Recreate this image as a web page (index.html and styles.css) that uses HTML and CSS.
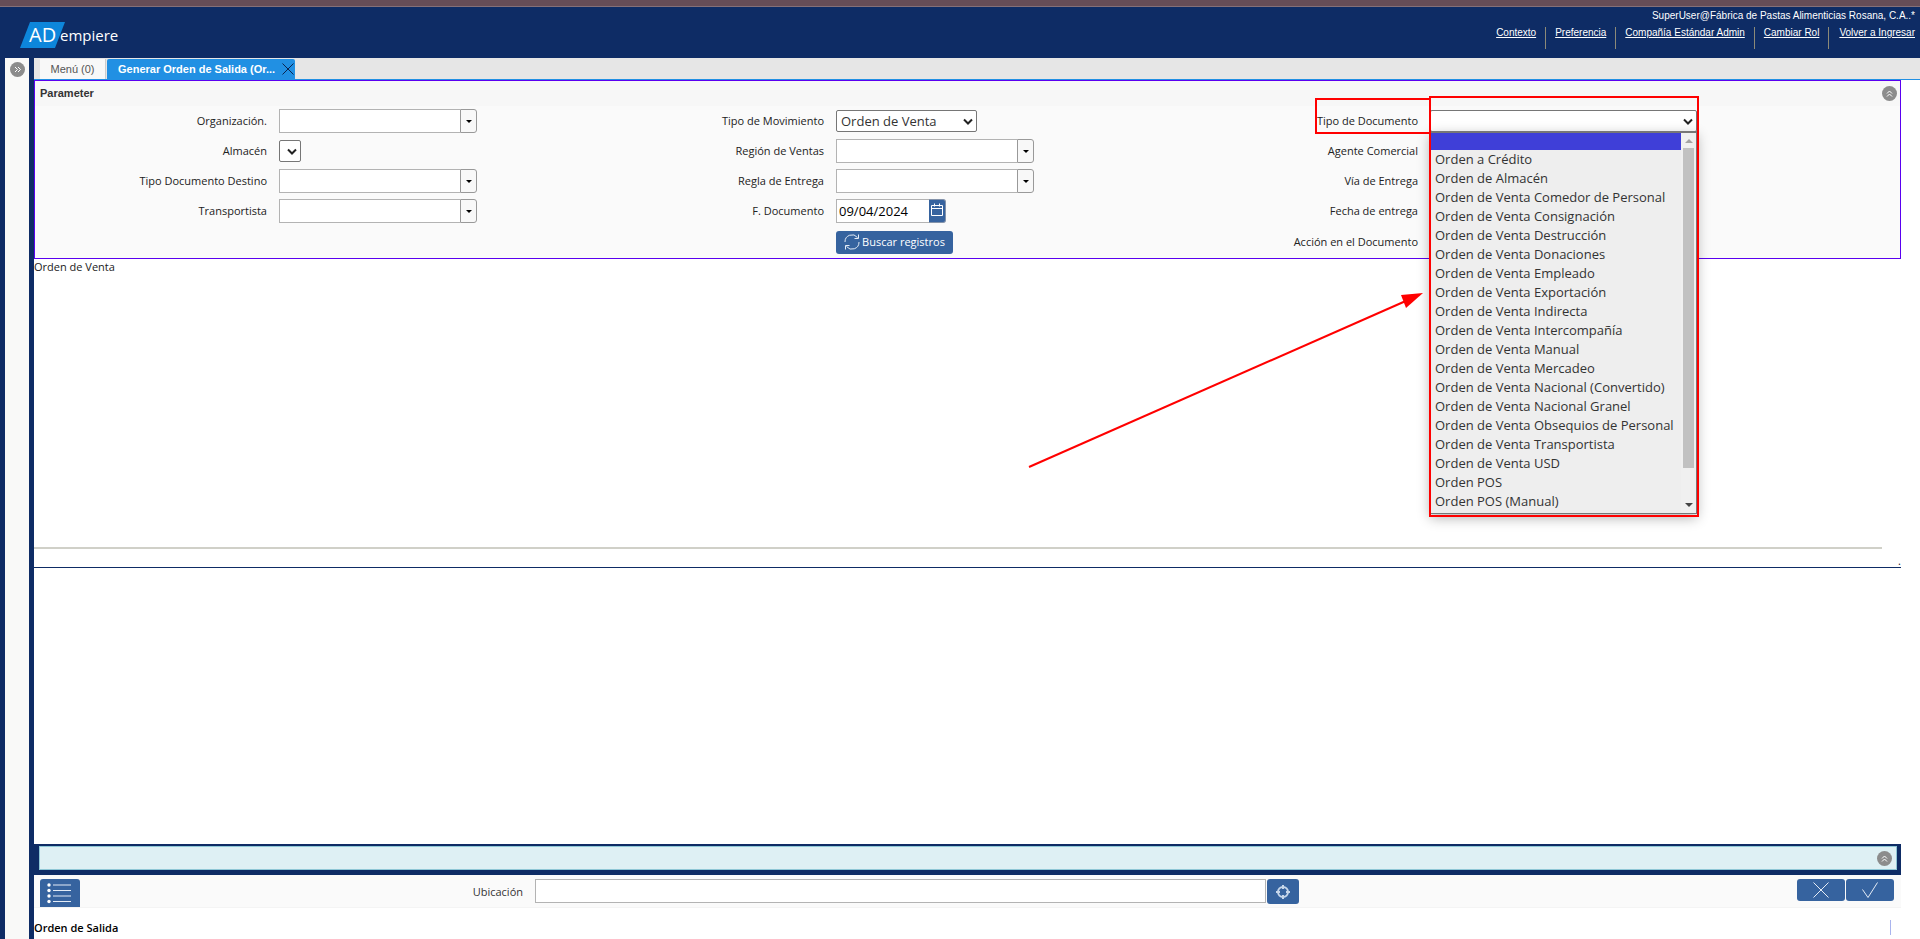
FILE: index.html
```html
<!DOCTYPE html>
<html lang="es">
<head>
<meta charset="utf-8">
<title>ADempiere - Generar Orden de Salida</title>
<link rel="stylesheet" href="styles.css">
</head>
<body>
<div class="app">
  <div class="top-strip"></div>
  <header class="header">
    <div class="logo">
      <svg class="logo-shape" viewBox="0 0 45 26" aria-hidden="true"><path d="M10 0H45L35 26H0Z" fill="#0d86db"/></svg>
      <span class="logo-ad">AD</span><span class="logo-rest">empiere</span>
    </div>
    <div class="session">
      <div class="user">SuperUser@Fábrica de Pastas Alimenticias Rosana, C.A..*</div>
      <nav class="links">
        <a href="#">Contexto</a>
        <a href="#">Preferencia</a>
        <a href="#">Compañía Estándar Admin</a>
        <a href="#">Cambiar Rol</a>
        <a href="#">Volver a Ingresar</a>
      </nav>
    </div>
  </header>
  <div class="workspace">
    <aside class="side">
      <button class="round" aria-label="Expandir">
        <svg viewBox="0 0 15 15"><path d="M5 5l2.500 2.500L5 10M8 5l2.500 2.500L8 10"/></svg>
      </button>
    </aside>
    <main class="main">
      <div class="tabs">
        <button class="tab">Menú (0)</button>
        <button class="tab active"><span>Generar Orden de Salida (Or...</span>
          <svg class="tab-close" viewBox="0 0 12 12"><path d="M0.500 0.500l11 11M11.500 0.500l-11 11"/></svg>
        </button>
      </div>
      <div class="content">
        <section class="panel">
          <div class="panel-head">
            <span>Parameter</span>
            <button class="round" aria-label="Contraer"><svg viewBox="0 0 15 15"><path d="M5 7.500L7.500 5L10 7.500M5 10.500L7.500 8L10 10.500"/></svg></button>
          </div>
          <form class="form">
            <label for="org">Organización.</label>
            <div class="combo"><input id="org" type="text"><button type="button" aria-label="Abrir"></button></div>
            <label for="mov">Tipo de Movimiento</label>
            <div class="pick pick-mov"><select id="mov"><option>Orden de Venta</option></select><svg class="chev" viewBox="0 0 10 7"><path d="M1 1.500l4 4l4-4"/></svg></div>
            <label for="doc">Tipo de Documento</label>
            <div class="pick pick-doc">
              <select id="doc"><option></option></select><svg class="chev" viewBox="0 0 10 7"><path d="M1 1.500l4 4l4-4"/></svg>
              <div class="menu">
                <ul class="options">
                  <li class="selected"></li>
                  <li>Orden a Crédito</li>
                  <li>Orden de Almacén</li>
                  <li>Orden de Venta Comedor de Personal</li>
                  <li>Orden de Venta Consignación</li>
                  <li>Orden de Venta Destrucción</li>
                  <li>Orden de Venta Donaciones</li>
                  <li>Orden de Venta Empleado</li>
                  <li>Orden de Venta Exportación</li>
                  <li>Orden de Venta Indirecta</li>
                  <li>Orden de Venta Intercompañía</li>
                  <li>Orden de Venta Manual</li>
                  <li>Orden de Venta Mercadeo</li>
                  <li>Orden de Venta Nacional (Convertido)</li>
                  <li>Orden de Venta Nacional Granel</li>
                  <li>Orden de Venta Obsequios de Personal</li>
                  <li>Orden de Venta Transportista</li>
                  <li>Orden de Venta USD</li>
                  <li>Orden POS</li>
                  <li>Orden POS (Manual)</li>
                </ul>
                <div class="scroll"><i class="up"></i><i class="thumb"></i><i class="down"></i></div>
              </div>
              <div class="mark mark-label"></div>
              <div class="mark mark-menu"></div>
              <svg class="arrow" viewBox="0 0 396 176"><path d="M1 175L380 8" stroke="#f00" stroke-width="2"/><path d="M395 1L373 3L378 16Z" fill="#f00"/></svg>
            </div>

            <label for="alm">Almacén</label>
            <div class="pick pick-empty"><select id="alm"></select><svg class="chev" viewBox="0 0 10 7"><path d="M1 1.500l4 4l4-4"/></svg></div>
            <label for="reg">Región de Ventas</label>
            <div class="combo"><input id="reg" type="text"><button type="button" aria-label="Abrir"></button></div>
            <span class="caption">Agente Comercial</span>
            <div></div>

            <label for="dest">Tipo Documento Destino</label>
            <div class="combo"><input id="dest" type="text"><button type="button" aria-label="Abrir"></button></div>
            <label for="regla">Regla de Entrega</label>
            <div class="combo"><input id="regla" type="text"><button type="button" aria-label="Abrir"></button></div>
            <span class="caption">Vía de Entrega</span>
            <div></div>

            <label for="trans">Transportista</label>
            <div class="combo"><input id="trans" type="text"><button type="button" aria-label="Abrir"></button></div>
            <label for="fecha">F. Documento</label>
            <div class="combo date"><input id="fecha" type="text" value="09/04/2024"><button type="button" aria-label="Calendario"><svg viewBox="0 0 14 14"><path d="M1.500 2.500h11v10h-11zM1.500 5.500h11M4.500 0.500v3M9.500 0.500v3"/></svg></button></div>
            <span class="caption">Fecha de entrega</span>
            <div></div>

            <div></div>
            <div></div>
            <div></div>
            <div><button type="button" class="btn search"><svg viewBox="0 0 16 16"><path d="M1 8A7 7 0 0 1 13.500 3.500M14.500 0.500V4.500H10.500M15 8A7 7 0 0 1 2.500 12.500M1.500 15.500V11.500H5.500"/></svg>Buscar registros</button></div>
            <span class="caption">Acción en el Documento</span>
            <div></div>
          </form>
        </section>
        <section class="results">
          <div class="results-title">Orden de Venta</div>
          <div class="grid-end"></div>
          <div class="dot">.</div>
        </section>
        <section class="blank"></section>
        <div class="status">
          <div class="status-box"><button class="round" aria-label="Expandir"><svg viewBox="0 0 15 15"><path d="M5 7.500L7.500 5L10 7.500M5 10.500L7.500 8L10 10.500"/></svg></button></div>
        </div>
        <div class="toolbar">
          <button class="btn list" aria-label="Lista"><svg viewBox="0 0 26 22"><g fill="#fff" stroke="none"><circle cx="2" cy="3" r="1.700"/><circle cx="2" cy="8.500" r="1.700"/><circle cx="2" cy="14" r="1.700"/><circle cx="2" cy="19.500" r="1.700"/></g><path d="M6 3h18M6 8.500h18M6 14h18M6 19.500h18"/></svg></button>
          <label for="ubi">Ubicación</label>
          <input id="ubi" type="text">
          <button class="btn locate" aria-label="Localizar"><svg viewBox="0 0 14 14"><circle cx="7" cy="7" r="5"/><path d="M7 0v4M7 10v4M0 7h4M10 7h4"/></svg></button>
          <div class="actions">
            <button class="btn" aria-label="Cancelar"><svg viewBox="0 0 16 16"><path d="M0.500 0.500l15 15M15.500 0.500l-15 15"/></svg></button>
            <button class="btn" aria-label="Aceptar"><svg viewBox="0 0 16 16"><path d="M0.500 7.500L6 15.500L15.500 0.500"/></svg></button>
          </div>
        </div>
        <div class="footer"><span>Orden de Salida</span><i></i></div>
      </div>
    </main>
  </div>
</div>
</body>
</html>
```

FILE: styles.css
```css
* { box-sizing: border-box; }
body {
  margin: 0;
  font-family: "Open Sans", "Noto Sans", sans-serif;
  font-size: 11px;
  color: #333;
  overflow: hidden;
}
button { font: inherit; padding: 0; border: 0; cursor: pointer; }
svg { display: block; fill: none; }
.app { display: flex; flex-direction: column; height: 100vh; background: #fff; }
.top-strip { height: 7px; flex: none; background: #664d57; border-bottom: 1px solid #857078; }
.header {
  flex: none; height: 51px; background: #0e2c65; color: #fff;
  display: flex; justify-content: space-between; align-items: flex-start;
}
.logo { position: relative; display: flex; align-items: center; height: 26px; margin: 15px 0 0 20px; }
.logo-shape { position: absolute; left: 0; top: 0; width: 45px; height: 26px; }
.logo-ad { position: relative; width: 40px; padding-left: 9px; font-size: 20px; line-height: 26px; }
.logo-rest { font-size: 15px; line-height: 26px; }
.session {
  font-family: "Liberation Sans", Arial, sans-serif; font-size: 10px; line-height: 12px;
  padding: 2px 5px 0 0; text-align: right;
}
.user { margin-top: 1px; }
.links { display: flex; justify-content: flex-end; margin-top: 5px; }
.links a { color: #fff; height: 22px; padding: 0 9px; border-right: 1px solid #8c8a78; }
.links a:last-child { padding: 0 0 0 10px; border-right: 0; }
.workspace { flex: 1; display: flex; min-height: 0; }
.side {
  flex: none; width: 34px; background: #f9f9f8; padding: 4px 0 0 5px;
  border-left: 5px solid #0e2c65; border-right: 5px solid #0e2c65;
}
.round { display: block; width: 15px; height: 15px; border-radius: 50%; background: #8c8c8c; }
.round svg { width: 15px; height: 15px; stroke: #fff; stroke-width: 1; }
.main { flex: 1; min-width: 0; display: flex; flex-direction: column; }
.tabs {
  flex: none; display: flex; height: 22px; background: #e6e6e6; border-bottom: 1px solid #2190e3;
  padding: 1px 0 0 6px; gap: 1px; font-family: "Liberation Sans", Arial, sans-serif;
}
.tab { width: 66px; background: #f8f8f8; color: #555; border-right: 1px solid #ccc; font-size: 11px; }
.tab.active {
  width: 188px; display: flex; align-items: center; justify-content: space-between;
  background: #2190e3; color: #fff; font-weight: bold; padding: 0 1px 0 11px; border: 0;
  border-radius: 2px 2px 0 0;
}
.tab-close { width: 12px; height: 12px; stroke: #0b2550; stroke-width: 1; }
.content { flex: 1; display: flex; flex-direction: column; margin-right: 19px; min-height: 0; }
.panel { flex: none; border: 1px solid #5a00f0; background: #fafafa; }
.panel-head {
  display: flex; justify-content: space-between; align-items: center; height: 25px;
  padding: 0 3px 0 5px; background: #f7f7f7;
  font-family: "Liberation Sans", Arial, sans-serif; font-weight: bold; line-height: 13px;
}
.form {
  display: grid; align-items: center; grid-template-rows: 30px 30px 30px 30px 32px;
  grid-template-columns: 244fr 300fr 257fr 344fr 250fr 470fr;
}
.form label, .caption { text-align: right; padding-right: 12px; line-height: 16px; color: #222; }
.combo { display: flex; width: 198px; height: 24px; }
input {
  min-width: 0; border: 1px solid #b3b3b3; background: #fff; outline: 0; height: 24px;
  font-family: "Open Sans", "Noto Sans", sans-serif; font-size: 13px; padding: 0 2px; color: #000;
}
.combo input { flex: 1; border-right: 0; }
.combo button {
  width: 17px; border: 1px solid #999; border-radius: 0 3px 3px 0; background: #f8f8f8;
  display: flex; align-items: center; justify-content: center;
}
.combo button:empty::after { content: ""; border: 3px solid transparent; border-top-color: #000; border-bottom: 0; }
.combo.date { width: 110px; }
.combo.date button { border-color: #8493aa; border-left: 0; background: #36639f; align-items: flex-start; padding-top: 3px; }
.date svg { width: 14px; height: 14px; stroke: #fff; stroke-width: 1; }
.pick { position: relative; height: 22px; }
.pick select {
  appearance: none; width: 100%; height: 22px; border: 1px solid #767676; border-radius: 2px;
  background: #fff; color: #333; font-family: "Open Sans", "Noto Sans", sans-serif; font-size: 13px; padding: 0 4px;
  display: block;
}
.chev { position: absolute; right: 4px; top: 8px; width: 10px; height: 7px; stroke: #222; stroke-width: 2; }
.pick-mov { width: 141px; }
.pick-empty { width: 22px; }
.pick-doc { width: 267px; }
.menu {
  position: absolute; z-index: 2; left: 0; top: 21px; width: 267px; display: flex;
  border: 1px solid #777; border-top-width: 2px; background: #eee;
  box-shadow: 0 4px 12px rgba(0, 0, 0, .3);
}
.options { flex: 1; list-style: none; margin: 0; padding: 0 0 2px; font-size: 13px; }
.options li { height: 19px; line-height: 19px; padding-left: 4px; white-space: nowrap; }
.options .selected { height: 17px; background: #3f3fd8; }
.scroll { width: 15px; display: flex; flex-direction: column; align-items: center; background: #f0f0f0; padding: 6px 0; }
.scroll i { display: block; }
.up { border: 4px solid transparent; border-bottom-color: #a3a3a3; border-top: 0; }
.thumb { width: 11px; height: 320px; margin: 5px 0 auto; background: #c1c1c1; }
.down { border: 4px solid transparent; border-top-color: #444; border-bottom: 0; }
.mark { position: absolute; z-index: 3; border: 2px solid #f00; pointer-events: none; }
.mark-label { left: -115px; top: -12px; width: 116px; height: 36px; }
.mark-menu { left: -1px; top: -14px; width: 270px; height: 421px; }
.arrow { position: absolute; z-index: 3; left: -402px; top: 182px; width: 396px; height: 176px; pointer-events: none; }
.btn { background: #36639f; color: #fff; border-radius: 3px; display: flex; align-items: center; justify-content: center; }
.btn svg { width: 16px; height: 16px; stroke: #e4ecf6; stroke-width: 1; }
.search { width: 117px; height: 23px; gap: 2px; line-height: 16px; padding-bottom: 1px; }
.results { flex: none; display: flex; flex-direction: column; height: 309px; border-bottom: 1px solid #0e2c65; color: #222; }
.results-title { line-height: 16px; flex: 1; }
.grid-end { height: 2px; margin-right: 19px; background: #d0d0c8; }
.dot { height: 18px; line-height: 24px; text-align: right; }
.blank { flex: 1; }
.status { flex: none; height: 31px; background: #0e2c65; padding: 2px 4px 5px 5px; }
.status-box {
  display: flex; align-items: center; justify-content: flex-end; height: 24px; padding-right: 4px;
  background: #def0f4; border: 1px solid #8fc7d6;
}
.toolbar {
  flex: none; display: grid; align-items: start; height: 33px; padding: 4px 7px 0 6px; background: #fafafa;
  grid-template-columns: 40px 455fr 731fr 33px 595fr;
  border-bottom: 1px solid #f4f4f4;
}
.toolbar label { text-align: right; padding-right: 12px; line-height: 26px; color: #333; }
.list { width: 40px; height: 28px; border-radius: 3px 3px 0 0; }
.list svg { width: 26px; height: 22px; }
.locate { width: 32px; height: 25px; margin-left: 1px; }
.locate svg { width: 14px; height: 14px; stroke-width: 2; stroke: #c6d6ea; }
.actions { display: flex; justify-content: flex-end; gap: 1px; }
.actions .btn { width: 48px; height: 22px; }
.footer {
  flex: none; display: flex; justify-content: space-between; align-items: center; height: 31px;
  padding: 7px 10px 0 0; font-weight: 600; color: #000;
}
.footer i { width: 1px; height: 15px; background: #a9b4ee; }
```
